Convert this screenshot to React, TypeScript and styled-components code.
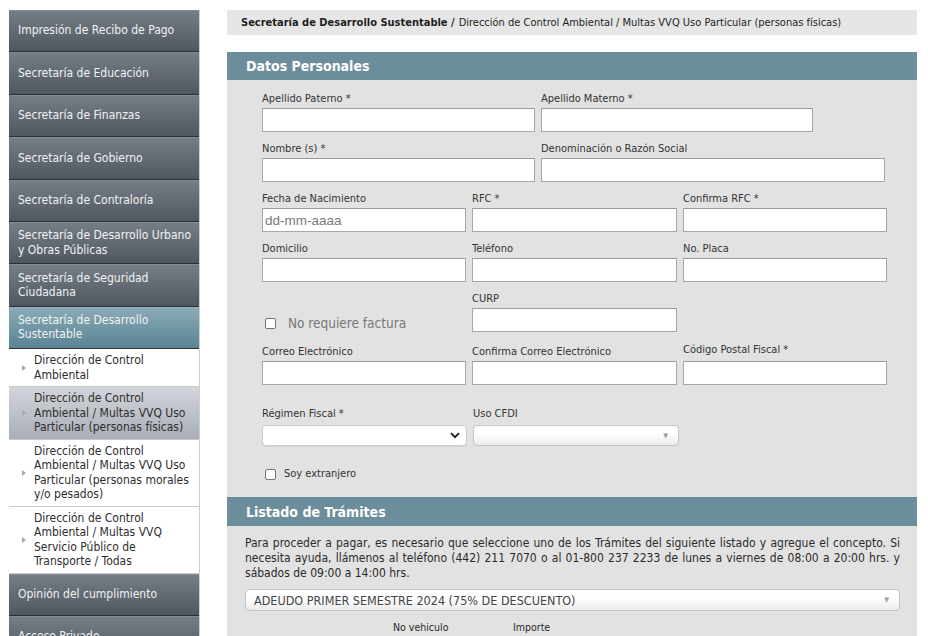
import React from 'react';
import styled, { createGlobalStyle } from 'styled-components';

const GlobalStyle = createGlobalStyle`
  html, body {
    margin: 0;
    padding: 0;
    background: #ffffff;
  }
  body {
    font-family: 'DejaVu Sans Condensed', 'DejaVu Sans', sans-serif;
    color: #333;
    overflow: hidden;
  }
  * {
    box-sizing: border-box;
  }
`;

const Page = styled.div`
  display: flex;
  align-items: flex-start;
  gap: 27px;
  padding: 10px 11px 0 9px;
  height: 636px;
  overflow: hidden;
`;

/* ---------- sidebar ---------- */

const Sidebar = styled.nav`
  width: 191px;
  flex: none;
  display: flex;
  flex-direction: column;
  border-right: 1px solid #cfcfcf;
`;

const MenuItem = styled.div<{ $active?: boolean }>`
  min-height: 42.4px;
  display: flex;
  align-items: center;
  padding: 4px 3px 4px 9px;
  font-size: 12px;
  line-height: 14.5px;
  color: #f2f2f2;
  background: ${(p) =>
    p.$active
      ? 'linear-gradient(#8aacb7, #5a8394)'
      : 'linear-gradient(#767e87, #50575f)'};
  border-bottom: 1px solid #2c3035;
  box-shadow: inset 0 1px 0 rgba(255, 255, 255, 0.1);
`;

const SubItem = styled.div<{ $selected?: boolean }>`
  display: flex;
  align-items: center;
  gap: 8px;
  padding: 4px 4px 4px 13px;
  font-size: 12px;
  line-height: 14.5px;
  color: #2d2d2d;
  background: ${(p) =>
    p.$selected ? 'linear-gradient(#d2d5da, #a9aeb7)' : '#ffffff'};
  border-bottom: 1px solid #c9c9c9;
`;

const Arrow = styled.span`
  flex: none;
  width: 0;
  height: 0;
  border-left: 4px solid #a8a8a8;
  border-top: 3px solid transparent;
  border-bottom: 3px solid transparent;
`;

/* ---------- main ---------- */

const Main = styled.main`
  flex: 1;
  display: flex;
  flex-direction: column;
  min-width: 0;
`;

const Breadcrumb = styled.div`
  height: 25px;
  background: #e6e6e6;
  padding: 0 14px;
  display: flex;
  align-items: center;
  font-size: 11px;
  color: #1e1e1e;
  white-space: nowrap;

  b {
    font-weight: bold;
    margin-right: 4px;
  }
`;

const SectionHeader = styled.h2<{ $mt?: number }>`
  margin: ${(p) => p.$mt ?? 0}px 0 0;
  height: ${(p) => (p.$mt ? 28 : 29)}px;
  background: #6b8d9c;
  color: #ffffff;
  font-size: 14px;
  font-weight: bold;
  padding-left: 19px;
  display: flex;
  align-items: center;
`;

const FormPanel = styled.section`
  background: #e2e2e2;
  padding: 12px 0 16px 35px;
`;

const Row = styled.div<{ $mt?: number }>`
  display: flex;
  gap: 6px;
  margin-top: ${(p) => p.$mt ?? 0}px;
`;

const Field = styled.div<{ $w: number; $end?: boolean }>`
  width: ${(p) => p.$w}px;
  display: flex;
  flex-direction: column;
  justify-content: ${(p) => (p.$end ? 'flex-end' : 'flex-start')};
`;

const Label = styled.label<{ $mb?: number; $up?: number }>`
  font-size: 11px;
  line-height: 14px;
  color: #333;
  margin-bottom: ${(p) => p.$mb ?? 2}px;
  position: relative;
  top: ${(p) => -(p.$up ?? 0)}px;
`;

const TextInput = styled.input`
  width: 100%;
  height: 24px;
  margin: 0;
  border: 1px solid #a8a8a8;
  border-top-color: #9a9a9a;
  background: #ffffff;
  padding: 0 2px;
  font-family: 'Liberation Sans', Arial, sans-serif;
  font-size: 13.5px;
  outline: none;

  &::placeholder {
    color: #7a7a7a;
  }
`;

const NativeSelect = styled.div`
  height: 21px;
  border: 1px solid #cdcdcd;
  border-radius: 4px;
  background: #ffffff;
  box-shadow: 0 1px 1px rgba(0, 0, 0, 0.06);
  display: flex;
  align-items: center;
  justify-content: flex-end;
  padding-right: 6px;
`;

const FancySelect = styled.div<{ $h?: number }>`
  height: ${(p) => p.$h ?? 21}px;
  border: 1px solid #c4c4c4;
  border-radius: 4px;
  background: linear-gradient(#ffffff 40%, #ececec);
  display: flex;
  align-items: center;
  justify-content: space-between;
  padding: 0 10px 0 8px;
  font-size: 12.5px;
  color: #444;
  white-space: nowrap;
`;

const Caret = styled.span`
  font-size: 7px;
  color: #a0a0a0;
`;

const CheckRow = styled.div<{ $size?: number; $gap?: number; $mb?: number }>`
  display: flex;
  align-items: center;
  gap: ${(p) => p.$gap ?? 8}px;
  padding-left: 3px;
  margin-bottom: ${(p) => p.$mb ?? 0}px;
  font-size: ${(p) => p.$size ?? 11}px;
  line-height: 14px;
  color: ${(p) => ((p.$size ?? 0) > 12 ? '#777' : '#333')};
`;

const CheckBox = styled.span`
  width: 11px;
  height: 11px;
  flex: none;
  border: 1px solid #777;
  border-radius: 2px;
  background: #ffffff;
`;

const ListPanel = styled.section`
  background: #e2e2e2;
  padding: 10px 17px 20px 18px;
`;

const Intro = styled.p`
  margin: 0;
  font-size: 12px;
  line-height: 15px;
  color: #2a2a2a;
  text-align: justify;
`;

const SelectWrap = styled.div`
  margin-top: 8px;
`;

const ColumnHeads = styled.div`
  display: grid;
  grid-template-columns: 120px 120px;
  margin-top: 9px;
  padding-left: 148px;
  font-size: 10.5px;
  line-height: 14px;
  color: #2a2a2a;
`;

const Chevron = () => (
  <svg width="10" height="7" viewBox="0 0 10 7">
    <path d="M1 1.2 L5 5.2 L9 1.2" fill="none" stroke="#1f1f1f" strokeWidth="1.8" />
  </svg>
);

const mainItems = [
  'Impresión de Recibo de Pago',
  'Secretaría de Educación',
  'Secretaría de Finanzas',
  'Secretaría de Gobierno',
  'Secretaría de Contraloría',
  'Secretaría de Desarrollo Urbano y Obras Públicas',
  'Secretaría de Seguridad Ciudadana',
];

const subItems = [
  'Dirección de Control Ambiental',
  'Dirección de Control Ambiental / Multas VVQ Uso Particular (personas físicas)',
  'Dirección de Control Ambiental / Multas VVQ Uso Particular (personas morales y/o pesados)',
  'Dirección de Control Ambiental / Multas VVQ Servicio Público de Transporte / Todas',
];

const App = () => {
  return (
    <>
      <GlobalStyle />
      <Page>
        <Sidebar>
          {mainItems.map((t) => (
            <MenuItem key={t}>{t}</MenuItem>
          ))}
          <MenuItem $active>Secretaría de Desarrollo Sustentable</MenuItem>
          {subItems.map((t, i) => (
            <SubItem key={t} $selected={i === 1}>
              <Arrow />
              <span>{t}</span>
            </SubItem>
          ))}
          <MenuItem>Opinión del cumplimiento</MenuItem>
          <MenuItem>Acceso Privado</MenuItem>
        </Sidebar>

        <Main>
          <Breadcrumb>
            <b>Secretaría de Desarrollo Sustentable /</b>
            Dirección de Control Ambiental / Multas VVQ Uso Particular (personas físicas)
          </Breadcrumb>

          <SectionHeader $mt={17}>Datos Personales</SectionHeader>
          <FormPanel>
            <Row>
              <Field $w={273}>
                <Label>Apellido Paterno *</Label>
                <TextInput />
              </Field>
              <Field $w={272}>
                <Label>Apellido Materno *</Label>
                <TextInput />
              </Field>
            </Row>
            <Row $mt={10}>
              <Field $w={273}>
                <Label>Nombre (s) *</Label>
                <TextInput />
              </Field>
              <Field $w={344}>
                <Label>Denominación o Razón Social</Label>
                <TextInput />
              </Field>
            </Row>
            <Row $mt={10}>
              <Field $w={204}>
                <Label>Fecha de Nacimiento</Label>
                <TextInput placeholder="dd-mm-aaaa" />
              </Field>
              <Field $w={205}>
                <Label>RFC *</Label>
                <TextInput />
              </Field>
              <Field $w={204}>
                <Label>Confirma RFC *</Label>
                <TextInput />
              </Field>
            </Row>
            <Row $mt={10}>
              <Field $w={204}>
                <Label>Domicilio</Label>
                <TextInput />
              </Field>
              <Field $w={205}>
                <Label>Teléfono</Label>
                <TextInput />
              </Field>
              <Field $w={204}>
                <Label>No. Placa</Label>
                <TextInput />
              </Field>
            </Row>
            <Row $mt={10}>
              <Field $w={204} $end>
                <CheckRow $size={13.5} $gap={12} $mb={2}>
                  <CheckBox />
                  No requiere factura
                </CheckRow>
              </Field>
              <Field $w={205}>
                <Label>CURP</Label>
                <TextInput />
              </Field>
            </Row>
            <Row $mt={13}>
              <Field $w={204}>
                <Label>Correo Electrónico</Label>
                <TextInput />
              </Field>
              <Field $w={205}>
                <Label>Confirma Correo Electrónico</Label>
                <TextInput />
              </Field>
              <Field $w={204}>
                <Label $up={2}>Código Postal Fiscal *</Label>
                <TextInput />
              </Field>
            </Row>
            <Row $mt={22}>
              <Field $w={205}>
                <Label $mb={4}>Régimen Fiscal *</Label>
                <NativeSelect>
                  <Chevron />
                </NativeSelect>
              </Field>
              <Field $w={206}>
                <Label $mb={4}>Uso CFDI</Label>
                <FancySelect>
                  <span />
                  <Caret>▼</Caret>
                </FancySelect>
              </Field>
            </Row>
            <Row $mt={21}>
              <CheckRow>
                <CheckBox />
                Soy extranjero
              </CheckRow>
            </Row>
          </FormPanel>

          <SectionHeader>Listado de Trámites</SectionHeader>
          <ListPanel>
            <Intro>
              Para proceder a pagar, es necesario que seleccione uno de los Trámites del siguiente
              listado y agregue el concepto. Si necesita ayuda, llámenos al teléfono (442) 211 7070
              o al 01-800 237 2233 de lunes a viernes de 08:00 a 20:00 hrs. y sábados de 09:00 a
              14:00 hrs.
            </Intro>
            <SelectWrap>
              <FancySelect $h={22}>
                <span>ADEUDO PRIMER SEMESTRE 2024 (75% DE DESCUENTO)</span>
                <Caret>▼</Caret>
              </FancySelect>
            </SelectWrap>
            <ColumnHeads>
              <span>No vehiculo</span>
              <span>Importe</span>
            </ColumnHeads>
          </ListPanel>
        </Main>
      </Page>
    </>
  );
};

export default App;
